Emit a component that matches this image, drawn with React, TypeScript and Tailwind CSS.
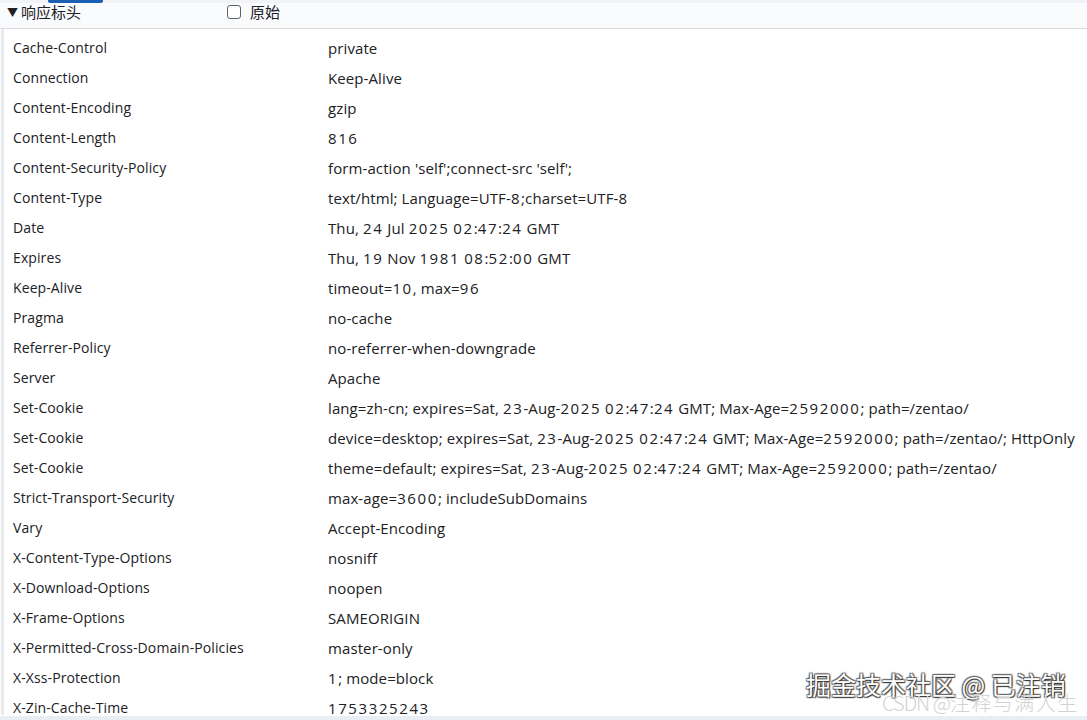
import React from 'react';

const headers: [string, string][] = [
  ['Cache-Control', 'private'],
  ['Connection', 'Keep-Alive'],
  ['Content-Encoding', 'gzip'],
  ['Content-Length', '816'],
  ['Content-Security-Policy', "form-action 'self';connect-src 'self';"],
  ['Content-Type', 'text/html; Language=UTF-8;charset=UTF-8'],
  ['Date', 'Thu, 24 Jul 2025 02:47:24 GMT'],
  ['Expires', 'Thu, 19 Nov 1981 08:52:00 GMT'],
  ['Keep-Alive', 'timeout=10, max=96'],
  ['Pragma', 'no-cache'],
  ['Referrer-Policy', 'no-referrer-when-downgrade'],
  ['Server', 'Apache'],
  ['Set-Cookie', 'lang=zh-cn; expires=Sat, 23-Aug-2025 02:47:24 GMT; Max-Age=2592000; path=/zentao/'],
  ['Set-Cookie', 'device=desktop; expires=Sat, 23-Aug-2025 02:47:24 GMT; Max-Age=2592000; path=/zentao/; HttpOnly'],
  ['Set-Cookie', 'theme=default; expires=Sat, 23-Aug-2025 02:47:24 GMT; Max-Age=2592000; path=/zentao/'],
  ['Strict-Transport-Security', 'max-age=3600; includeSubDomains'],
  ['Vary', 'Accept-Encoding'],
  ['X-Content-Type-Options', 'nosniff'],
  ['X-Download-Options', 'noopen'],
  ['X-Frame-Options', 'SAMEORIGIN'],
  ['X-Permitted-Cross-Domain-Policies', 'master-only'],
  ['X-Xss-Protection', '1; mode=block'],
  ['X-Zin-Cache-Time', '1753325243'],
];

// digits in the original font are a bit wider, so runs of them get extra tracking
function Value({ text }: { text: string }) {
  const parts = text.split(/(\d+)/);
  return (
    <>
      {parts.map((p, i) =>
        /^\d+$/.test(p) ? (
          <span key={i} className="tracking-[1.6px]">{p}</span>
        ) : (
          <span key={i}>{p}</span>
        )
      )}
    </>
  );
}

export default function App() {
  return (
    <div
      className="relative w-[1087px] h-[720px] overflow-hidden bg-white text-[#202124]"
      style={{ fontFamily: '"Open Sans", "Noto Sans", "Noto Sans CJK SC", sans-serif' }}
    >
      <div className="relative h-[29px] bg-[#fafbfd] border-b border-[#dadce0]">
        <div className="absolute left-0 right-0 top-0 h-[3px] bg-[#f1f3f6]" />
        <div className="absolute left-[48px] top-0 w-[55px] h-[3px] rounded-b-[2px] bg-[#1a5fb4]" />
        <div className="relative flex items-center h-[24px] text-[15px]">
          <span className="ml-[7px] text-[11px] leading-none">▼</span>
          <span className="ml-[3px]" style={{ fontFamily: '"Noto Sans CJK SC", sans-serif' }}>响应标头</span>
          <span className="ml-[146px] w-[14px] h-[14px] border border-[#5f6368] rounded-[3px] bg-white" />
          <span className="ml-[9px]" style={{ fontFamily: '"Noto Sans CJK SC", sans-serif' }}>原始</span>
        </div>
      </div>
      <div className="flex border-l-[3px] border-[#e8eaed] ml-[1px] h-[686px]">
        <div className="flex flex-col pt-[4px] leading-[30px] w-full">
          {headers.map(([k, v], i) => (
            <div key={i} className="flex h-[30px] shrink-0">
              <div className="w-[324px] pl-[9px] whitespace-nowrap text-[14px] tracking-[0.1px]">{k}</div>
              <div className="whitespace-nowrap text-[15px] tracking-[0.1px]">
                <Value text={v} />
              </div>
            </div>
          ))}
        </div>
      </div>
      <div className="absolute left-0 right-0 bottom-0 h-[4px] bg-[#e9eef5]" />
      <div
        className="absolute left-[806px] top-[667px] text-[25px] leading-[34px] text-white"
        style={{
          fontFamily: '"Noto Sans CJK SC", sans-serif',
          textShadow: '1px 1px 1px #333, -1px -1px 1px #666, 1px -1px 1px #666, -1px 1px 1px #666',
        }}
      >
        掘金技术社区 @ 已注销
      </div>
      <div
        className="absolute left-[882px] top-[690px] text-[20px] leading-[26px] font-light text-[#d2d2d2] whitespace-nowrap"
        style={{ fontFamily: '"Noto Sans CJK SC", sans-serif' }}
      >
        <span className="tracking-[-1px]">CSDN @</span>
        <span className="tracking-[1.5px]">注释与满人生</span>
      </div>
    </div>
  );
}
